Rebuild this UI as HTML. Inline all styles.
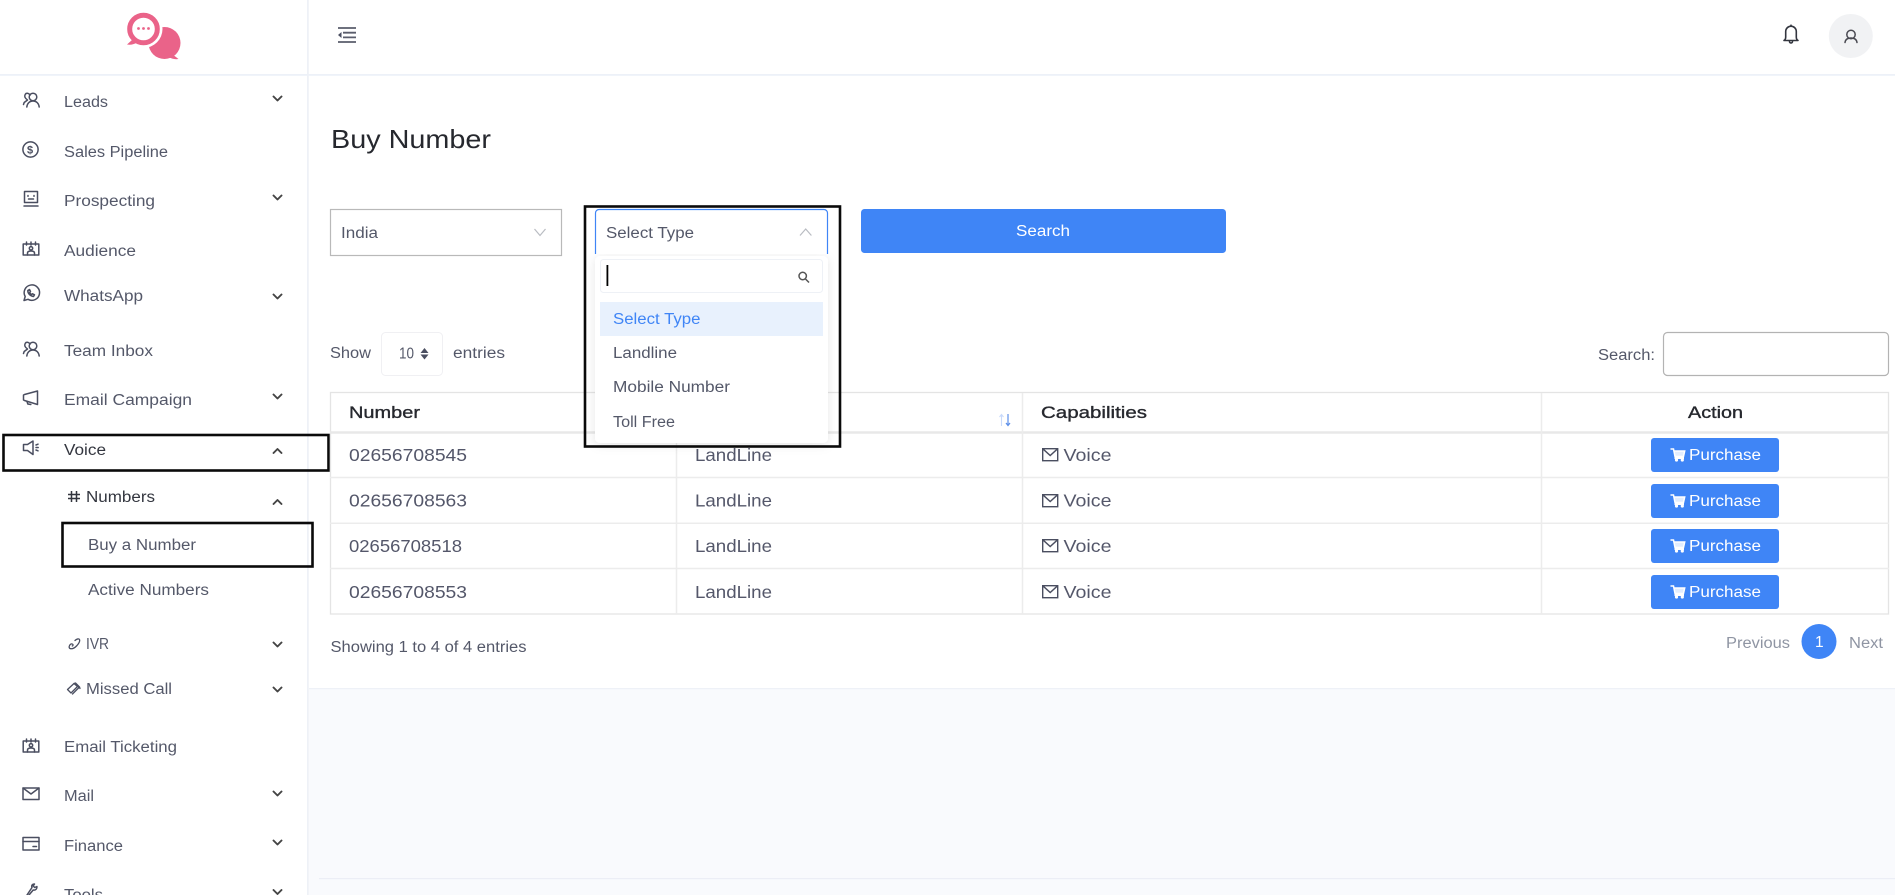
<!DOCTYPE html>
<html lang="en">
<head>
<meta charset="utf-8">
<title>Buy Number</title>
<style>
html,body{margin:0;padding:0;width:1895px;height:895px;overflow:hidden;background:#fff}
svg{display:block}
text{font-family:"Liberation Sans",Arial,sans-serif;font-size:15.5px;fill:#545869}
.k{fill:#33363f}
.h{fill:#26282e;font-size:17px;stroke:#26282e;stroke-width:.35px}
.r{font-size:17.5px;fill:#54576a}
.g{fill:#8f95a3}
.w{fill:#fff}
.ic{fill:none;stroke:#4a4e60;stroke-width:1.5;stroke-linecap:round;stroke-linejoin:round}
.cv{fill:none;stroke:#444;stroke-width:1.9;stroke-linecap:round;stroke-linejoin:round}
.ln{stroke:#e8e8e8;stroke-width:1.5}
.bx{fill:none;stroke:#0a0a0a;stroke-width:2.6}
.btn{fill:#3f85f6}
</style>
</head>
<body>
<svg width="1895" height="895" viewBox="0 0 1895 895" xmlns="http://www.w3.org/2000/svg">
<defs>
<filter id="sh" x="-10%" y="-10%" width="120%" height="120%"><feDropShadow dx="0" dy="2" stdDeviation="5" flood-color="#000" flood-opacity=".1"/></filter>
<g id="ppl" class="ic"><circle cx="10" cy="5" r="3.800"/><path d="M3.800 15c.4-3.600 2.800-6 6.200-6s5.800 2.400 6.200 6"/><path d="M7 3.200A3.200 3.200 0 0 0 3 1.500 3.300 3.300 0 0 0 2.800 6.500L4.500 8 1.200 10.500 0.500 12.500"/></g>
<g id="cal" class="ic"><rect x="0.700" y="2" width="15.600" height="11"/><path d="M4 0v3M8.500 0v3M13 0v3M5 13v-2c0-1.500 1.500-2 3.500-2s3.500.5 3.500 2v2"/><circle cx="8.500" cy="6.300" r="1.700"/></g>
<g id="cart"><path d="M0 1h3l1.500 7.500h8.500L14.200 3H3.500" fill="none" stroke="#fff" stroke-width="1.500"/><rect x="4" y="3" width="9.500" height="5" fill="#fff" opacity=".85"/><path d="M4 8.500h9.500v2.500H4z" fill="#fff"/><circle cx="6" cy="12" r="1.600" fill="#fff"/><circle cx="11.800" cy="12" r="1.600" fill="#fff"/></g>
<g id="env" fill="none" stroke="#4a4e60" stroke-width="1.400"><rect x="0.700" y="0.700" width="15" height="12"/><path d="M0.700 0.700L8.200 7.500 15.700 0.700"/></g>
</defs>

<!-- page backgrounds -->
<rect width="1895" height="895" fill="#fff"/>
<rect x="309" y="689" width="1586" height="206" fill="#f9fafd"/>
<rect x="309" y="688" width="1586" height="1.200" fill="#eef1f7"/>
<rect x="319" y="878" width="1576" height="1.200" fill="#eceef6"/>
<rect x="0" y="74" width="1895" height="1.800" fill="#edf1f8"/>
<rect x="307" y="0" width="1.800" height="895" fill="#eef1f7"/>

<!-- logo -->
<circle cx="164.500" cy="43" r="16" fill="#ea6389"/>
<path fill="#ea6389" d="M172 54l6.500 5c-3.500.6-7-.2-10-2z"/>
<circle cx="143.500" cy="29" r="19" fill="#fff"/>
<path fill="#ea6389" d="M132 40l-5 4.500c3.500.6 7 0 10-2z"/>
<circle cx="143.500" cy="29" r="13.800" fill="#fff" stroke="#ea6389" stroke-width="5"/>
<circle cx="138.500" cy="28.500" r="1.400" fill="#ea6389"/><circle cx="143.500" cy="28.500" r="1.400" fill="#ea6389"/><circle cx="148.500" cy="28.500" r="1.400" fill="#ea6389"/>

<!-- sidebar icons -->
<use href="#ppl" x="23" y="92"/>
<circle class="ic" cx="30.500" cy="149.500" r="7.600"/><text x="27" y="153.700" style="font-size:11px;font-weight:bold;fill:#4a4e60">$</text>
<g class="ic"><path d="M24.500 191.500h13v11h-13z"/><path d="M24 206h14M28 195.500v.8M34 195.500v.8M28.500 199h5"/></g>
<use href="#cal" x="22.500" y="242"/>
<g class="ic"><path d="M24 300.500l1.200-4a7.700 7.700 0 1 1 2.800 2.800z"/><path d="M27.800 290.500c0 3 2.500 5.800 5.700 6l1-1.700-2-1-1 .7c-.8-.4-1.500-1.200-1.800-2l.8-1-1-2z"/></g>
<use href="#ppl" x="23" y="341"/>
<g class="ic"><path d="M37.500 391v13.500L24.500 400.500l-1-.5v-5l1-.5z"/><path d="M27 401.500l.8 2.500 3 .5"/></g>
<g class="ic"><path d="M33 441v13.500L27.500 450.500H23.500v-6h4z"/><path d="M36 445l2-.8M36 447.500h2.200M36 450l2 .8"/></g>
<path fill="none" stroke="#33363f" stroke-width="1.500" d="M71.500 491v11M76.500 491v11M68 494.500h12M68 498.500h12"/>
<g class="ic" style="stroke-width:1.300"><path d="M75 640.500c1.800-1.800 4-2 4.500-1 .7 1.500-.3 3.500-2.500 6-2.300 2.500-5 3.800-7 3-1.200-.6-1.200-2.700.3-4 1-.8 2-.8 2.600 0 .4.600 0 1.300-.6 1.500"/></g>
<g class="ic" style="stroke-width:1.300"><path d="M74 683.500l-6.500 6 3.500 3.500 6.500-6.500z"/><path d="M76 684.500l3 3-6.500 6.500M74 683.500l1.500-.5 4 4 .5 1.500"/></g>
<use href="#cal" x="22.500" y="739"/>
<g class="ic"><rect x="23" y="788" width="16" height="11.500"/><path d="M23 788l8 6 8-6"/></g>
<g class="ic"><rect x="23" y="837.500" width="16" height="12.500"/><path d="M23 841.500h16M33 846.500h3.500"/></g>
<g class="ic"><path d="M27 895l5-7.500c-.8-2 .2-3.500 2.500-3.500l-1.300 2 1.500 1.500 2.200-1c.3 2.500-1.500 4-3.700 3.500L29 895"/></g>

<!-- sidebar text -->
<text x="64" y="107" textLength="44" lengthAdjust="spacingAndGlyphs">Leads</text>
<text x="64" y="157" textLength="104" lengthAdjust="spacingAndGlyphs">Sales Pipeline</text>
<text x="64" y="206" textLength="91" lengthAdjust="spacingAndGlyphs">Prospecting</text>
<text x="64" y="256" textLength="72" lengthAdjust="spacingAndGlyphs">Audience</text>
<text x="64" y="301" textLength="79" lengthAdjust="spacingAndGlyphs">WhatsApp</text>
<text x="64" y="356" textLength="89" lengthAdjust="spacingAndGlyphs">Team Inbox</text>
<text x="64" y="405" textLength="128" lengthAdjust="spacingAndGlyphs">Email Campaign</text>
<text class="k" x="64" y="455" textLength="42" lengthAdjust="spacingAndGlyphs">Voice</text>
<text class="k" x="86" y="502" textLength="69" lengthAdjust="spacingAndGlyphs">Numbers</text>
<text x="88" y="550" textLength="108" lengthAdjust="spacingAndGlyphs">Buy a Number</text>
<text x="88" y="595" textLength="121" lengthAdjust="spacingAndGlyphs">Active Numbers</text>
<text x="86" y="649" textLength="23" lengthAdjust="spacingAndGlyphs">IVR</text>
<text x="86" y="694" textLength="86" lengthAdjust="spacingAndGlyphs">Missed Call</text>
<text x="64" y="752" textLength="113" lengthAdjust="spacingAndGlyphs">Email Ticketing</text>
<text x="64" y="801" textLength="30" lengthAdjust="spacingAndGlyphs">Mail</text>
<text x="64" y="851" textLength="59" lengthAdjust="spacingAndGlyphs">Finance</text>
<text x="64" y="900" textLength="39" lengthAdjust="spacingAndGlyphs">Tools</text>

<!-- chevrons -->
<path class="cv" d="M273.500 96.500l4 4 4-4M273.500 195.500l4 4 4-4M273.500 294.500l4 4 4-4M273.500 394.500l4 4 4-4M273.500 642.500l4 4 4-4M273.500 687.500l4 4 4-4M273.500 791.500l4 4 4-4M273.500 840.500l4 4 4-4M273.500 890l4 4 4-4"/>
<path class="cv" d="M273.500 453l4-4 4 4M273.500 504l4-4 4 4"/>

<!-- sidebar highlight boxes -->
<rect class="bx" x="3.500" y="435" width="325" height="35.500"/>
<rect class="bx" x="62.500" y="523" width="250" height="43.500"/>

<!-- header -->
<path fill="none" stroke="#5a5d6c" stroke-width="1.800" d="M338 28h18M343 32.700h13M343 37.400h13M338 42h18"/>
<path fill="#4a4e60" d="M338 35l3.500-3v6z"/>
<g class="ic" style="stroke:#33363f;stroke-width:1.600"><path d="M1784 40.500c1.200-.7 1.700-1.700 1.700-3.500v-5.500a5.300 5.300 0 0 1 10.600 0V37c0 1.800.5 2.800 1.700 3.500z"/><path d="M1789.500 41.500a1.500 1.500 0 0 0 3 0M1791 26v-.8"/></g>
<circle cx="1850.800" cy="36" r="22" fill="#f1f2f4"/>
<g class="ic" style="stroke:#4a4a52"><circle cx="1851" cy="34.500" r="4.200"/><path d="M1845 42.500c.4-3 2.700-4.500 6-4.500s5.600 1.500 6 4.500"/></g>

<text x="331" y="148" textLength="160" lengthAdjust="spacingAndGlyphs" style="font-size:26px;fill:#26282e">Buy Number</text>

<!-- India select -->
<rect x="330.500" y="209.500" width="231" height="46" fill="#fff" stroke="#b9b9b9" stroke-width="1.200"/>
<text x="341" y="238" textLength="37" lengthAdjust="spacingAndGlyphs">India</text>
<path fill="none" stroke="#b9bcc2" stroke-width="1.200" d="M534.500 229l5.500 6.500 5.500-6.500"/>

<!-- Search button -->
<rect class="btn" x="861" y="209" width="365" height="44" rx="3.500"/>
<text class="w" x="1016" y="236" textLength="54" lengthAdjust="spacingAndGlyphs">Search</text>

<!-- Show entries -->
<text x="330" y="358" textLength="41" lengthAdjust="spacingAndGlyphs">Show</text>
<rect x="381.500" y="332.500" width="61" height="43" rx="4" fill="#fff" stroke="#f0f0f3"/>
<text x="399" y="358.500" textLength="15" lengthAdjust="spacingAndGlyphs">10</text>
<path fill="#4a4e60" d="M420.500 353l4-5 4 5zM420.500 354.500l4 5 4-5z"/>
<text x="453" y="358" textLength="52" lengthAdjust="spacingAndGlyphs">entries</text>

<!-- Search field -->
<text x="1598" y="360" textLength="57" lengthAdjust="spacingAndGlyphs">Search:</text>
<rect x="1663.500" y="332.500" width="225" height="43" rx="4" fill="#fff" stroke="#b3b3b3" stroke-width="1.200"/>

<!-- table -->
<rect x="330.500" y="392.500" width="1558" height="221.500" fill="#fff" stroke="#e4e4e4" stroke-width="1.300"/>
<path class="ln" style="stroke-width:2.600" d="M330 432.500h1559"/>
<path class="ln" d="M330 477.500h1559M330 523.300h1559M330 568.500h1559M676.500 393v221M1022.500 393v221M1541.500 393v221" style="stroke:#ececec"/>

<text class="h" x="349" y="418" textLength="71" lengthAdjust="spacingAndGlyphs">Number</text>
<path fill="none" stroke="#c9dafb" stroke-width="1.100" d="M1001.500 426v-11M999.500 417l2-2.500 2 2.500"/>
<path fill="none" stroke="#5d8fe8" stroke-width="1.200" d="M1008 414v11M1006 423l2 2.500 2-2.500"/>
<text class="h" x="1041" y="418" textLength="106" lengthAdjust="spacingAndGlyphs">Capabilities</text>
<text class="h" x="1688" y="418" textLength="55" lengthAdjust="spacingAndGlyphs">Action</text>

<text class="r" x="349" y="461" textLength="118" lengthAdjust="spacingAndGlyphs">02656708545</text>
<text class="r" x="695" y="461" textLength="77" lengthAdjust="spacingAndGlyphs">LandLine</text>
<use href="#env" x="1042" y="448"/>
<text class="r" x="1063.500" y="461" textLength="48" lengthAdjust="spacingAndGlyphs">Voice</text>
<rect class="btn" x="1651" y="438" width="128" height="34" rx="3"/>
<use href="#cart" x="1670.500" y="448"/>
<text class="w" x="1689" y="460" textLength="72" lengthAdjust="spacingAndGlyphs">Purchase</text>

<text class="r" x="349" y="506.500" textLength="118" lengthAdjust="spacingAndGlyphs">02656708563</text>
<text class="r" x="695" y="506.500" textLength="77" lengthAdjust="spacingAndGlyphs">LandLine</text>
<use href="#env" x="1042" y="494"/>
<text class="r" x="1063.500" y="506.500" textLength="48" lengthAdjust="spacingAndGlyphs">Voice</text>
<rect class="btn" x="1651" y="484" width="128" height="34" rx="3"/>
<use href="#cart" x="1670.500" y="494"/>
<text class="w" x="1689" y="506" textLength="72" lengthAdjust="spacingAndGlyphs">Purchase</text>

<text class="r" x="349" y="552" textLength="113" lengthAdjust="spacingAndGlyphs">02656708518</text>
<text class="r" x="695" y="552" textLength="77" lengthAdjust="spacingAndGlyphs">LandLine</text>
<use href="#env" x="1042" y="539"/>
<text class="r" x="1063.500" y="552" textLength="48" lengthAdjust="spacingAndGlyphs">Voice</text>
<rect class="btn" x="1651" y="529" width="128" height="34" rx="3"/>
<use href="#cart" x="1670.500" y="539"/>
<text class="w" x="1689" y="551" textLength="72" lengthAdjust="spacingAndGlyphs">Purchase</text>

<text class="r" x="349" y="598" textLength="118" lengthAdjust="spacingAndGlyphs">02656708553</text>
<text class="r" x="695" y="598" textLength="77" lengthAdjust="spacingAndGlyphs">LandLine</text>
<use href="#env" x="1042" y="585"/>
<text class="r" x="1063.500" y="598" textLength="48" lengthAdjust="spacingAndGlyphs">Voice</text>
<rect class="btn" x="1651" y="575" width="128" height="34" rx="3"/>
<use href="#cart" x="1670.500" y="585"/>
<text class="w" x="1689" y="597" textLength="72" lengthAdjust="spacingAndGlyphs">Purchase</text>

<!-- table footer -->
<text x="330.500" y="652" textLength="196" lengthAdjust="spacingAndGlyphs">Showing 1 to 4 of 4 entries</text>
<text class="g" x="1726" y="648" textLength="64" lengthAdjust="spacingAndGlyphs">Previous</text>
<circle cx="1819" cy="641.500" r="17.500" fill="#3f85f6"/>
<text class="w" x="1815" y="647">1</text>
<text class="g" x="1849" y="648" textLength="34" lengthAdjust="spacingAndGlyphs">Next</text>

<!-- Select Type dropdown (open) -->
<rect x="595" y="256" width="233" height="187" rx="5" fill="#fff" filter="url(#sh)"/>
<path d="M595.500 254V213a3.500 3.500 0 0 1 3.500-3.500h225a3.500 3.500 0 0 1 3.500 3.500v41" fill="#fff" stroke="#3f85f6" stroke-width="1.200"/>
<text x="606" y="238" textLength="88" lengthAdjust="spacingAndGlyphs">Select Type</text>
<path fill="none" stroke="#b9bcc2" stroke-width="1.200" d="M800 235.500l5.700-6.500 5.700 6.500"/>
<rect x="600.500" y="259.500" width="222" height="33" rx="3" fill="#fff" stroke="#eef1f6"/>
<rect x="606.500" y="265" width="1.800" height="21" fill="#000"/>
<g fill="none" stroke="#555" stroke-width="1.500"><circle cx="802.700" cy="276" r="3.700"/><path d="M805.500 279l3.500 3.500"/></g>
<rect x="600" y="302" width="223" height="34" fill="#e8f1fd"/>
<text x="613" y="324" textLength="87.500" lengthAdjust="spacingAndGlyphs" style="fill:#3f85f6">Select Type</text>
<text x="613" y="358" textLength="64" lengthAdjust="spacingAndGlyphs">Landline</text>
<text x="613" y="392" textLength="117" lengthAdjust="spacingAndGlyphs">Mobile Number</text>
<text x="613" y="427" textLength="62" lengthAdjust="spacingAndGlyphs">Toll Free</text>
<rect class="bx" x="585" y="206.500" width="255" height="240"/>
</svg>
</body>
</html>
